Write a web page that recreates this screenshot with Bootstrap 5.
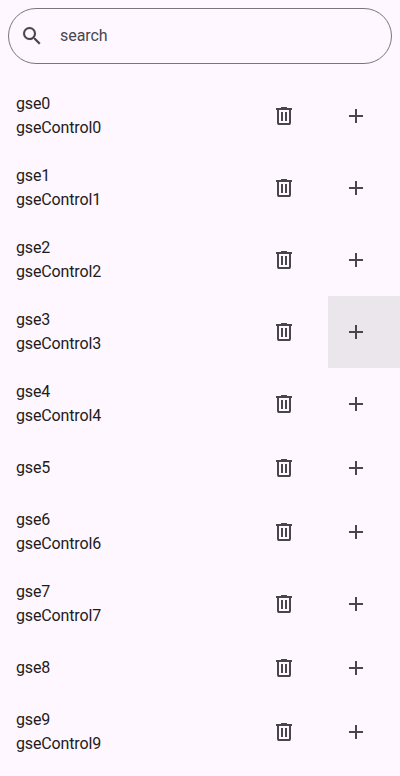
<!DOCTYPE html>
<html lang="en">
<head>
<meta charset="utf-8">
<meta name="viewport" content="width=device-width, initial-scale=1">
<title>gse</title>
<link href="https://cdn.jsdelivr.net/npm/bootstrap@5.3.0/dist/css/bootstrap.min.css" rel="stylesheet">
<style>
body{background:#fef7ff;color:#1d1b20;font-family:Roboto,sans-serif;font-size:16px;line-height:24px}
.search-field{height:56px;border:1px solid #79747e;padding-left:11px}
.search-field input{color:#49454f;line-height:24px;margin-left:16px;letter-spacing:-.05px}
.search-field input::placeholder{color:#49454f;opacity:1}
.icon{width:24px;height:24px;fill:#49454f;display:block}
.icon-search{stroke:#49454f;stroke-width:.12px}
.entry{height:72px;letter-spacing:-.14px}
.entry-short{height:56px;letter-spacing:-.14px}
.act{width:72px;height:100%;border:0;padding:0 16px 0 0;background:none}
.act.hovered{background:#ebe6eb}
</style>
<script src="https://cdn.jsdelivr.net/npm/bootstrap@5.3.0/dist/js/bootstrap.bundle.min.js"></script>
</head>
<body class="overflow-hidden">
<svg class="d-none">
<symbol id="search" viewBox="0 0 24 24"><path d="M15.5 14h-.79l-.28-.27A6.471 6.471 0 0 0 16 9.5 6.5 6.5 0 1 0 9.5 16c1.61 0 3.09-.59 4.23-1.57l.27.28v.79l5 4.99L20.49 19l-4.99-5zm-6 0C7.01 14 5 11.99 5 9.5S7.01 5 9.5 5 14 7.01 14 9.5 11.99 14 9.5 14z"/></symbol>
<symbol id="trash" viewBox="0 0 24 24"><path d="M7 21q-.825 0-1.412-.587T5 19V6H4V4h5V3h6v1h5v2h-1v13q0 .825-.587 1.413T17 21zM17 6H7v13h10zM9 17h2V8H9zm4 0h2V8h-2z"/></symbol>
<symbol id="plus" viewBox="0 0 24 24"><path d="M19 13h-6v6h-2v-6H5v-2h6V5h2v6h6z"/></symbol>
</svg>
<header class="p-2"><div class="search-field d-flex align-items-center rounded-pill">
<svg class="icon icon-search"><use href="#search"/></svg>
<input class="border-0 bg-transparent p-0 flex-grow-1" type="text" placeholder="search" aria-label="search">
</div></header>
<main class="pt-2" id="entries"></main>
<script>
const list = document.getElementById('entries');
for (let i = 0; i < 10; i++) {
  const short = i === 5 || i === 8;
  const row = document.createElement('div');
  row.className = 'd-flex align-items-center ps-3 ' + (short ? 'entry-short' : 'entry');
  row.innerHTML = `<div class="flex-grow-1"><div>gse${i}</div>${short ? '' : `<div>gseControl${i}</div>`}</div>
    <button class="act d-flex align-items-center justify-content-center" aria-label="Delete"><svg class="icon"><use href="#trash"/></svg></button>
    <button class="act d-flex align-items-center justify-content-center${i === 3 ? ' hovered' : ''}" aria-label="Add"><svg class="icon"><use href="#plus"/></svg></button>`;
  list.append(row);
}
</script>
</body>
</html>
